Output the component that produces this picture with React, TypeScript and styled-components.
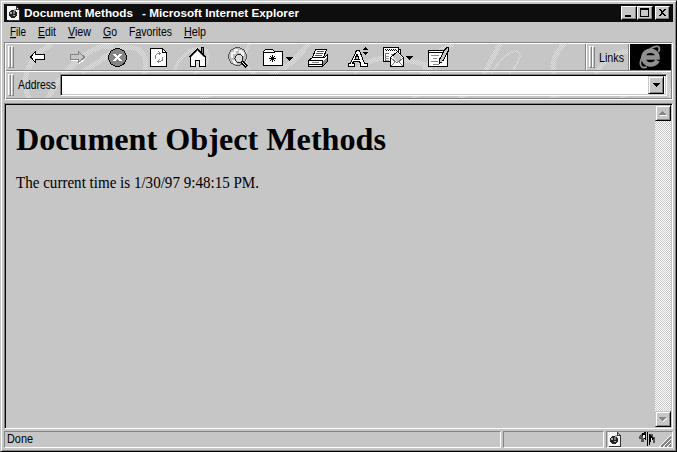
import React from 'react';
import styled, { createGlobalStyle } from 'styled-components';

const face = '#c6c6c6';
const shade = '#848484';

const Global = createGlobalStyle`
  * { box-sizing: border-box; }
  body { margin: 0; background: ${face}; overflow: hidden; }
  svg { display: block; shape-rendering: crispEdges; }
`;

const Frame = styled.div`
  width: 677px;
  height: 452px;
  display: flex;
  flex-direction: column;
  background: ${face};
  padding: 2px 2px 0 2px;
  border: 1px solid ${face};
  border-right-color: #000;
  border-bottom-color: #000;
  box-shadow: inset 1px 1px #fff, inset -1px -1px ${shade};
  font: 11px/13px "Liberation Sans", Arial, sans-serif;
  color: #000;
`;

const TitleBar = styled.div`
  display: flex;
  align-items: center;
  height: 18px;
  margin: 1px 1px 0;
  padding: 0 3px 0 3px;
  background: #0e0e0e;
  color: #fff;
  flex: none;
`;

const Label = styled.span<{ $w: number; $bold?: boolean; $gap?: number }>`
  display: block;
  width: ${p => p.$w}px;
  margin-left: ${p => p.$gap ?? 0}px;
  white-space: pre;
  font-weight: ${p => (p.$bold ? 700 : 400)};
  flex: none;
`;

const TextLine = styled.svg<{ $size: number; $serif?: boolean }>`
  overflow: visible;
  fill: currentColor;
  font-size: ${p => p.$size}px;
  font-family: ${p => (p.$serif ? '"Liberation Serif", "Times New Roman", serif' : '"Liberation Sans", Arial, sans-serif')};
`;

type FitProps = {
  text: string;
  w: number;
  bold?: boolean;
  gap?: number;
  size?: number;
  serif?: boolean;
  under?: number;
};

const Fit = ({ text, w, bold, gap, size = 11.5, serif, under }: FitProps) => (
  <Label $w={w} $gap={gap} $bold={bold}>
    <TextLine width={w + 4} height={Math.ceil(size * 1.4)} $size={size} $serif={serif}>
      <text x="0" y={Math.round(size)} textLength={w} lengthAdjust="spacingAndGlyphs">
        {under === undefined ? text : (
          <>{text.slice(0, under)}<tspan textDecoration="underline">{text[under]}</tspan>{text.slice(under + 1)}</>
        )}
      </text>
    </TextLine>
  </Label>
);

const Spacer = styled.div`flex: 1;`;

const Caption = styled.div<{ $gap?: number }>`
  width: ${p => (p.$gap === 0 ? 16 : 15)}px;
  height: 14px;
  margin-left: ${p => p.$gap ?? 0}px;
  background: ${face};
  border: 1px solid #fff;
  border-right-color: #000;
  border-bottom-color: #000;
  box-shadow: inset -1px -1px ${shade};
`;

const MenuBar = styled.nav`
  display: flex;
  height: 20px;
  padding: 2px 0 0 7px;
  flex: none;
`;

const Rebar = styled.div`
  position: relative;
  height: 58px;
  margin: 0 1px;
  border: 1px solid ${shade};
  border-right-color: #fff;
  border-bottom-color: #fff;
  box-shadow: inset 1px 1px #fff, inset -1px -1px ${shade};
  padding: 1px;
  flex: none;
`;

const Watermark = styled.svg`
  position: absolute;
  left: 1px;
  top: 1px;
`;

const Tools = styled.div`
  position: relative;
  display: flex;
  height: 26px;
`;

const Divider = styled.div`
  position: relative;
  height: 2px;
  border-top: 1px solid ${shade};
  border-bottom: 1px solid #fff;
`;

const AddressRow = styled.div`
  position: relative;
  display: flex;
  height: 26px;
  padding-right: 4px;
`;

const AddressLabel = styled.div`
  display: flex;
  align-items: center;
  width: 44px;
  padding: 1px 0 0 4px;
  flex: none;
`;

const Grip = styled.div`
  display: flex;
  width: 6px;
  height: 22px;
  margin: 2px 0 0 2px;
  flex: none;
  &::before, &::after {
    content: "";
    width: 3px;
    border: 1px solid #fff;
    border-right-color: ${shade};
    border-bottom-color: ${shade};
    background: ${face};
  }
`;

const Buttons = styled.div`
  display: flex;
  width: 572px;
  padding-left: 4px;
  border-right: 1px solid ${shade};
  flex: none;
`;

const Links = styled.div`
  display: flex;
  width: 43px;
  border-left: 1px solid #fff;
  border-right: 1px solid ${shade};
  flex: none;
`;

const LinksText = styled.div`
  display: flex;
  align-items: center;
  padding-top: 2px;
`;

const Brand = styled.div`
  width: 42px;
  border-left: 1px solid #fff;
  background: #000;
  flex: none;
  & svg { shape-rendering: auto; }
`;

const Combo = styled.div`
  display: flex;
  justify-content: flex-end;
  flex: 1;
  height: 22px;
  margin-top: 2px;
  margin-left: 2px;
  padding: 1px 2px;
  background: #fff;
  border: 1px solid ${shade};
  border-right-color: #fff;
  border-bottom-color: #fff;
  box-shadow: inset 1px 1px #000, inset -1px -1px ${face};
`;

const ArrowButton = styled.div<{ $h?: number }>`
  display: grid;
  place-items: center;
  width: 16px;
  height: ${p => p.$h ?? 16}px;
  background: ${face};
  border: 1px solid ${face};
  border-right-color: #000;
  border-bottom-color: #000;
  box-shadow: inset 1px 1px #fff, inset -1px -1px ${shade};
  flex: none;
`;

const View = styled.div`
  display: flex;
  flex: 1;
  margin: 3px 1px 0;
  border: 1px solid ${shade};
  border-right-color: #fff;
  border-bottom-color: #fff;
  box-shadow: inset 1px 1px #000;
  padding: 1px;
`;

const Page = styled.main`
  flex: 1;
  padding: 13px 0 0 10px;
`;

const Heading = styled.h1`
  margin: 0;
  height: 54px;
  font: inherit;
`;

const Paragraph = styled.p`
  margin: 0;
`;

const ScrollBar = styled.div`
  display: flex;
  flex-direction: column;
  justify-content: space-between;
  width: 16px;
  background: repeating-conic-gradient(#fff 0 25%, ${face} 0 50%) 0 0 / 2px 2px;
`;

const Status = styled.footer`
  display: flex;
  gap: 2px;
  height: 17px;
  margin: 2px 1px 3px;
  flex: none;
`;

const Pane = styled.div<{ $w?: number; $pad?: number }>`
  display: flex;
  align-items: center;
  width: ${p => (p.$w ? p.$w + 'px' : 'auto')};
  flex: ${p => (p.$w ? 'none' : '1')};
  padding-left: ${p => p.$pad ?? 2}px;
  border: 1px solid ${shade};
  border-right-color: #fff;
  border-bottom-color: #fff;
`;

const Doc = () => (
  <svg width="13" height="15" viewBox="0 0 13 15">
    <path d="M0 0h9v3h3v11H0z" fill="#f4f4f4" />
    <path d="M9 0h1v1h1v1h1v1h1v12H1v-1h11V4H9z" fill="#333" />
    <path d="M10 2h1v1h-1z" fill="#f4f4f4" />
    <path d="M4 4h4v1h1v1h1v4H9v1H8v1H4v-1H3v-1H2V6h1V5h1z" fill="#222" />
    <path d="M3 6h2v2H3zM7 3h2v2H7zM6 9h2v1H6z" fill="#aaa" />
    <path d="M6 5h2v3H6z" fill="#777" />
  </svg>
);

const icons: React.ReactNode[] = [
  <path d="M30.5 57L35.500 51.500V54.500H44.500V59.500H35.500V62.500Z" fill="#fff" stroke="#000" />,
  <>
    <path d="M85.500 58.500L79.500 63.500V60.500H71.500V55.500" fill="none" stroke="#fff" />
    <path d="M84.500 57L78.500 51.500V54.500H70.500V59.500H78.500V62.500Z" fill={face} stroke={shade} />
  </>,
  <>
    <circle cx="117.5" cy="57.5" r="9" fill="#848484" stroke="#000" />
    <path d="M113 54h3l1.500 2 1.500-2h3l-3 3.500 3 3.500h-3l-1.500-2-1.500 2h-3l3-3.500z" fill="#fff" />
  </>,
  <>
    <path d="M150.500 48.500H162.500L166.500 52.500V66.500H150.500Z" fill="#fff" stroke="#000" />
    <path d="M162.500 48.500V52.500H166.500" fill="none" stroke="#000" />
    <path d="M155.500 59V55.500L157.500 53.500H160M158.500 51.500L160.500 53.500L158.500 55.500M162.500 57V60L160.500 61.500H157M159.500 59.500L157.500 61.500L159.500 63.500" fill="none" stroke={shade} />
  </>,
  <>
    <path d="M201.500 53V47.500H203.500V55" fill="#848484" stroke="#000" />
    <path d="M190.500 57V66.500H205.500V57L197.500 49Z" fill="#fff" stroke="#000" />
    <path d="M195.500 66.500V60.500H199.500V66.500" fill="#ddd" stroke="#000" />
    <path d="M188.500 57.500L197.500 48.500L206.500 57.500" fill="none" stroke="#000" />
    <path d="M190.500 57.500L197.500 50.500L204.500 57.500" fill="none" stroke="#848484" />
  </>,
  <>
    <circle cx="237.500" cy="56.500" r="9" fill="#bcbcbc" stroke="#555" />
    <path d="M231 52h3v-3h4v2h-2v3h-3v4h-2zM239 50h3l2 3v3h-3v-3h-2zM232 60h3l2 4h-3z" fill="#f4f4f4" />
    <circle cx="239" cy="58.500" r="4" fill="#ddd" stroke="#222" />
    <path d="M242 62L247 67" stroke="#000" strokeWidth="3" />
    <path d="M242 62L246 66" stroke="#fff" />
  </>,
  <>
    <path d="M263.500 65.500V51.500L265.500 49.500H272.500L274.500 51.500H282.500V65.500Z" fill="#fff" stroke="#000" />
    <path d="M264 52.500H275" stroke="#000" />
    <path d="M272.500 55V62M269 58.500H276M270 56L275 61M275 56L270 61" stroke="#000" />
    <path d="M286 57H293V58H292V59H291V60H290V61H289V60H288V59H287V58H286Z" />
  </>,
  <>
    <path d="M308.500 60.500L312.500 57.500H324.500L327.500 54.500V61.500L322.500 66.500H308.500Z" fill="#fff" stroke="#000" />
    <path d="M323 61L327 57V61L323 66Z" fill="#848484" />
    <path d="M312.500 57.500L315.500 49.500H326.500L323.500 57.500Z" fill="#fff" stroke="#000" />
    <path d="M317 51.500H324M316 53.500H323M315 55.500H322" stroke="#555" />
    <path d="M309 60.500H323M309 64.500H322M322.500 60V66" stroke="#000" />
    <path d="M312 62.500H319" stroke="#888" />
  </>,
  <>
    <path d="M348.500 63.500H350.500L356.500 50.500H359.500L364.500 63.500H367.500V66.500H360.500V63.500L359.500 61.500H353.500L352.500 63.500H354.500V66.500H348.500ZM355 59H359L357 54Z" fill="#fff" stroke="#000" />
    <path d="M363 50H368V49H367V48H366V47H365V48H364V49H363ZM363 52H368V53H367V54H366V55H365V54H364V53H363Z" />
  </>,
  <>
    <path d="M387.500 49.500H400.500V62.500" fill="#fff" stroke="#000" />
    <path d="M383.500 47.500H398.500V61.500H383.500Z" fill="#fff" stroke="#000" />
    <path d="M385 56.500H389M385 58.500H389M385 60.500H389" stroke="#999" />
    <path d="M385 49.500H396M386 50.500H397" stroke="#000" strokeDasharray="1 1" />
    <path d="M385.500 53V60.500M385 53.500H389M391 54.500H396" stroke="#777" />
    <path d="M390.500 57.500L397.500 51.500L403.500 57.500V66.500H390.500Z" fill="#fff" stroke="#000" />
    <path d="M392 57L397 53L402 57L397 62Z" fill="#c6c6c6" />
    <path d="M391 58L397 63L403 58M391 66L396 61M403 66L398 61" fill="none" stroke="#777" />
    <path d="M406 56H413V57H412V58H411V59H410V60H409V59H408V58H407V57H406Z" />
  </>,
  <>
    <path d="M428.500 50.500H447.500V66.500H428.500Z" fill="#fff" stroke="#000" />
    <path d="M429 52.500H446" stroke="#000" />
    <path d="M431 55.500H439M433 58.500H437M431 61.500H438M433 64.500H439" stroke="#848484" />
    <path d="M439.500 63.500V59.500L445.500 48.500H446.500V47.500H448.500V50.500L442.500 61.500Z" fill="#c6c6c6" stroke="#000" />
  </>,
];

const menus: [string, number, number, number][] = [
  ['File', 16, 0, 12], ['Edit', 18, 0, 12], ['View', 23, 0, 12], ['Go', 14, 0, 12], ['Favorites', 43, 1, 12], ['Help', 22, 0, 0],
];

const Swirls = () => (
  <Watermark width="665" height="54" viewBox="6 44 665 54">
    <defs>
      <pattern id="dots" width="2" height="2" patternUnits="userSpaceOnUse">
        <path d="M0 0h1v1H0zM1 1h1v1H1z" fill="#dedede" />
      </pattern>
    </defs>
    <g fill="none" stroke="url(#dots)" strokeWidth="5">
      <path d="M29 98C20 80 28 56 52 44" />
      <path d="M48 98C66 65 92 46 108 46S98 63 82 72M116 49C140 43 150 54 144 74" />
      <path d="M174 72C181 48 206 42 208 54S199 70 190 77M250 44C242 54 246 72 256 74" strokeWidth="3" />
      <path d="M269 74Q292 68 308 44M200 98L211 94" />
      <path d="M353 73C372 54 391 56 415 62S428 74 420 74M423 74Q431 52 453 44M484 74L500 44" />
      <path d="M492 74Q500 56 514 51C524 50 520 62 509 75" strokeWidth="2" />
      <path d="M554 74C550 60 558 50 564 44M596 74C603 60 613 53 628 51" />
      <path d="M412 98L418 94M459 98L466 94M551 98L558 94M620 98L626 94M664 72L671 98" />
    </g>
  </Watermark>
);

export default function App() {
  return (
    <>
      <Global />
      <Frame>
        <TitleBar>
          <Doc />
          <Fit text="Document Methods" w={109} gap={4} bold />
          <Fit text="- Microsoft Internet Explorer" w={157} gap={9} bold />
          <Spacer />
          <Caption $gap={0}><svg width="13" height="12"><path d="M3 8h6v2H3z" /></svg></Caption>
          <Caption $gap={0}><svg width="13" height="12"><path d="M2 1h9v9H2zM3 3v6h7V3z" fillRule="evenodd" /></svg></Caption>
          <Caption $gap={2}><svg width="13" height="12"><path d="M3 2h2l1.500 2L8 2h2L7.500 5.500 10 9H8L6.500 7 5 9H3l2.500-3.500z" /></svg></Caption>
        </TitleBar>
        <MenuBar>
          {menus.map(([text, w, u, gap]) => (
            <React.Fragment key={text}>
              <Fit text={text} w={w} under={u} size={12} />
              <Label $w={gap} />
            </React.Fragment>
          ))}
        </MenuBar>
        <Rebar>
          <Swirls />
          <Tools>
            <Grip />
            <Buttons>
              {icons.map((icon, i) => (
                <svg key={i} width="40" height="26" viewBox={`${18 + 40 * i} 44 40 26`}>{icon}</svg>
              ))}
            </Buttons>
            <Links>
              <Grip />
              <LinksText><Fit text="Links" w={25} gap={4} size={12} /></LinksText>
            </Links>
            <Brand>
              <svg width="41" height="26" viewBox="630 44 41 26">
                <g fill="none" stroke="#909090">
                  <path d="M657.500 60.500C655 66.500 643.500 66 643.500 57.500C643.500 48.500 657.500 48.500 657.500 57.500H645" strokeWidth="4.600" />
                  <path d="M647 67C637 70 639 58 648 50.500C655 45 662 44.500 658.500 52" strokeWidth="1.800" />
                </g>
              </svg>
            </Brand>
          </Tools>
          <Divider />
          <AddressRow>
            <Grip />
            <AddressLabel><Fit text="Address" w={38} size={12} /></AddressLabel>
            <Combo>
              <ArrowButton $h={18}><svg width="7" height="4"><path d="M0 0h7v1H6v1H5v1H4v1H3V3H2V2H1V1H0z" /></svg></ArrowButton>
            </Combo>
          </AddressRow>
        </Rebar>
        <View>
          <Page>
            <Heading><Fit text="Document Object Methods" w={370} size={32} serif bold /></Heading>
            <Paragraph><Fit text="The current time is 1/30/97 9:48:15 PM." w={243} size={16} serif /></Paragraph>
          </Page>
          <ScrollBar>
            <ArrowButton><svg width="8" height="5"><path d="M3 0h1v1h1v1h1v1h1v1H0V3h1V2h1V1h1z" fill={shade} /><path d="M1 4h7v1H1z" fill="#fff" /></svg></ArrowButton>
            <ArrowButton><svg width="8" height="5"><path d="M0 0h7v1H6v1H5v1H4v1H3V3H2V2H1V1H0z" fill={shade} /><path d="M7 1h1v1H7v1H6v1H5v1H4V4h1V3h1V2h1z" fill="#fff" /></svg></ArrowButton>
          </ScrollBar>
        </View>
        <Status>
          <Pane><Fit text="Done" w={26} size={12} /></Pane>
          <Pane $w={101} />
          <Pane $w={67} $pad={1}>
            <Doc />
            <svg width="50" height="15" viewBox="622 432 50 15">
              <path d="M640 436l3-3h4v3h-2v6h-3v-3h-2zM651 434h3v3h2v6h-2v-3h-3z" fill="#555" />
              <path d="M643 433l4-1v9l-3-3zM651 435l4 3-4 5zM648 432h1v14h-1zM650 434h1v11h-1z" />
              <path d="M644 435h2v3h-2zM652 438h1v3h-1z" fill="#eee" />
              <path d="M660 447L672 435M664 447L672 439M668 447L672 443" stroke="#fff" />
              <path d="M662 447L672 437M666 447L672 441M670 447L672 445" stroke={shade} strokeWidth="2" />
            </svg>
          </Pane>
        </Status>
      </Frame>
    </>
  );
}
